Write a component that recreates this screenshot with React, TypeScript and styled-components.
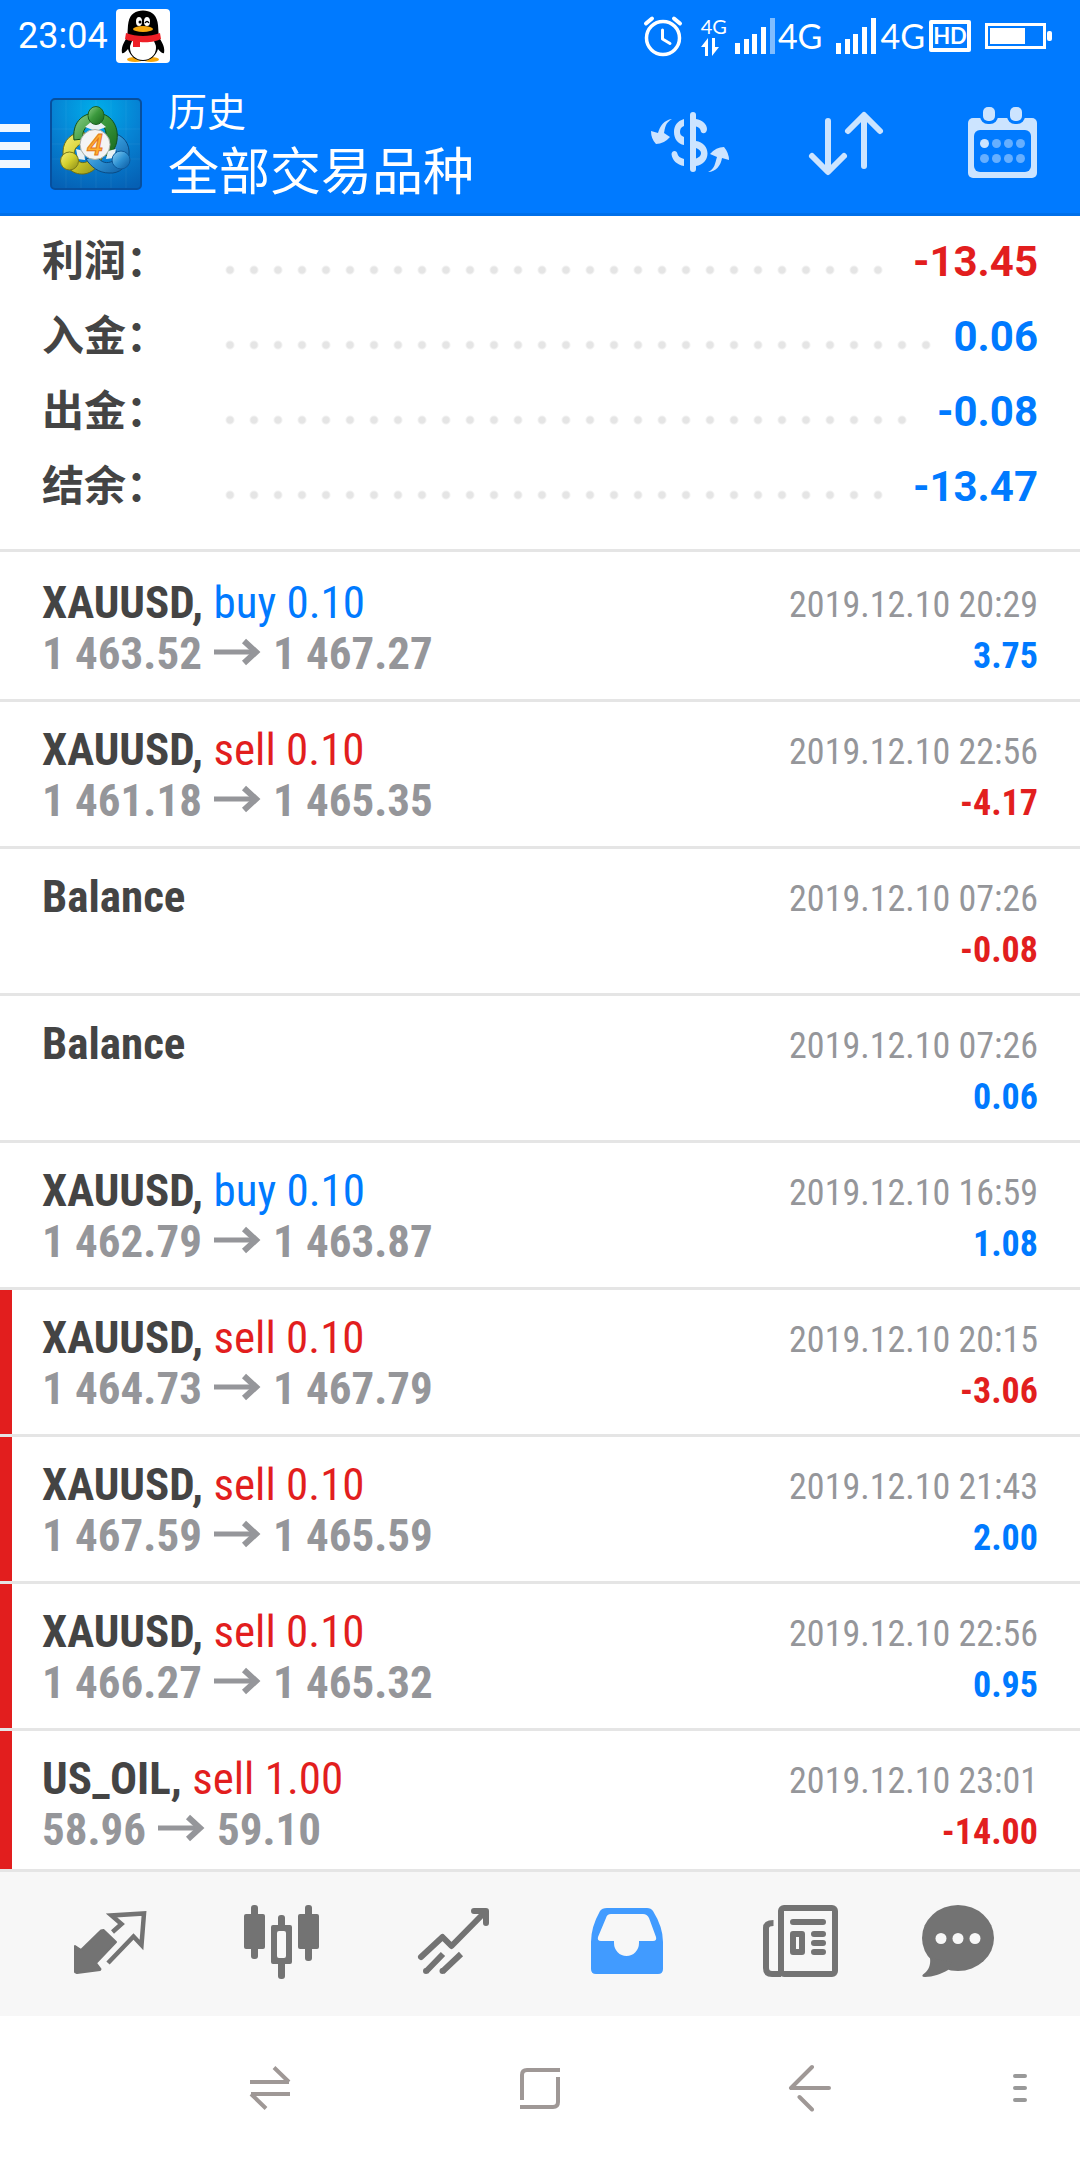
import React from "react";
import styled, { createGlobalStyle } from "styled-components";

const BLUE = "#007aff";
const RED = "#e21e1e";
const DARK = "#444444";
const GREY = "#95969a";
const LINE = "#e5e5e5";
const TAB = "#737373";
const ACTION = "#cce4ff";

const SANS = `Roboto, "Noto Sans CJK SC", sans-serif`;
const CONDENSED = `"Roboto Condensed", Roboto, sans-serif`;

const GlobalStyle = createGlobalStyle`
  *, *::before, *::after { box-sizing: border-box; }
  body { margin: 0; background: #ffffff; font-family: ${SANS}; }
  button { border: 0; padding: 0; background: none; font: inherit; color: inherit; cursor: pointer; }
  svg { display: block; flex: none; }
`;

const Screen = styled.div`
  display: flex;
  flex-direction: column;
  height: 100vh;
  background: #ffffff;
`;

/* ---------- status bar ---------- */

const StatusBar = styled.div`
  flex: none;
  display: flex;
  align-items: center;
  justify-content: space-between;
  height: 72px;
  padding: 0 28px 0 18px;
  background: ${BLUE};
  color: #ffffff;
`;

const StatusGroup = styled.div<{ $gap: number }>`
  display: flex;
  align-items: center;
  gap: ${(p) => p.$gap}px;
`;

const Clock = styled.time`
  font-size: 36px;
  line-height: 72px;
`;

const NetworkLabel = styled.span`
  font-family: Lato, sans-serif;
  font-size: 34px;
  line-height: 40px;
`;

const DataLabel = styled.div`
  display: flex;
  flex-direction: column;
  align-items: flex-start;
  gap: 2px;
  font-family: Lato, sans-serif;
  font-size: 20px;
  line-height: 20px;
`;

const HdBadge = styled.span`
  border: 4px solid #ffffff;
  border-radius: 2px;
  width: 42px;
  height: 32px;
  text-align: center;
  font-family: Lato, sans-serif;
  font-weight: 700;
  font-size: 22px;
  line-height: 24px;
`;

/* ---------- header ---------- */

const Header = styled.header`
  flex: none;
  display: flex;
  align-items: center;
  height: 144px;
  background: ${BLUE};
  box-shadow: inset 0 -3px 0 #0070ea;
  color: #ffffff;
`;

const MenuButton = styled.button`
  display: flex;
  flex-direction: column;
  gap: 10px;
  width: 50px;
  padding-top: 4px;
`;

const MenuLine = styled.span`
  width: 30px;
  height: 8px;
  background: #f0f7ff;
`;

const Titles = styled.div`
  display: flex;
  flex-direction: column;
  flex: 1;
  padding: 3px 0 0 26px;
`;

const Overline = styled.span`
  font-size: 39px;
  line-height: 54px;
`;

const Title = styled.h1`
  margin: 0;
  font-weight: 400;
  font-size: 51px;
  line-height: 66px;
`;

const ActionButton = styled.button`
  display: grid;
  place-items: center;
  width: 156px;
  height: 100%;
`;

/* ---------- summary ---------- */

const Summary = styled.dl`
  flex: none;
  margin: 0;
  padding: 8px 42px 25px;
  border-bottom: 3px solid ${LINE};
`;

const SummaryRow = styled.div`
  display: flex;
  align-items: center;
  height: 75px;
  font-size: 42px;
  line-height: 75px;
  font-weight: 700;
`;

const SummaryName = styled.dt`
  width: 176px;
  color: ${DARK};
`;

const Leader = styled.span`
  flex: 1;
  height: 10px;
  margin: 16px 20px 0 0;
  background: radial-gradient(circle at 12px 5px, ${LINE} 3px, transparent 5px) 0 0 / 24px 10px repeat-x;
`;

const SummaryValue = styled.dd<{ $color: string }>`
  margin: 0;
  color: ${(p) => p.$color};
`;

/* ---------- history ---------- */

const History = styled.ul`
  flex: 1;
  min-height: 0;
  overflow: hidden;
  margin: 0;
  padding: 3px 0 0;
  list-style: none;
`;

const Deal = styled.li<{ $marked: boolean }>`
  display: flex;
  justify-content: space-between;
  height: 147px;
  padding: 22px 42px 0;
  border-bottom: 3px solid ${LINE};
  background: linear-gradient(${(p) => (p.$marked ? RED : "transparent")} 0 0) 0 0 / 12px 100% no-repeat padding-box;
  font-family: ${CONDENSED};
`;

const DealSide = styled.div<{ $end?: boolean }>`
  display: flex;
  flex-direction: column;
  align-items: ${(p) => (p.$end ? "flex-end" : "flex-start")};
  padding-top: ${(p) => (p.$end ? 3 : 0)}px;
  font-size: ${(p) => (p.$end ? 36 : 45)}px;
  line-height: 51px;
`;

const Symbol = styled.strong`
  color: ${DARK};
`;

const Operation = styled.span<{ $color: string }>`
  color: ${(p) => p.$color};
`;

const Prices = styled.div`
  display: flex;
  align-items: center;
  gap: 12px;
  font-weight: 700;
  color: ${GREY};
`;

const DealTime = styled.time`
  color: ${GREY};
`;

const Profit = styled.strong<{ $color: string }>`
  color: ${(p) => p.$color};
`;

/* ---------- bottom bars ---------- */

const TabBar = styled.nav`
  flex: none;
  display: flex;
  height: 147px;
  padding: 0 24px;
  border-top: 3px solid ${LINE};
  background: #f7f7f7;
`;

const Tab = styled.button`
  flex: 1;
  display: grid;
  place-items: center;
`;

const SystemBar = styled.nav`
  flex: none;
  display: grid;
  grid-template-columns: 2fr 2fr 2fr 1fr;
  height: 144px;
  padding-left: 12.5%;
  background: #ffffff;
`;

const SystemButton = styled.button`
  display: grid;
  place-items: center;
  &:last-child { padding-left: 15px; }
`;

/* ---------- drawings ---------- */

const Penguin = () => (
  <svg width="54" height="54" viewBox="0 0 54 54" role="img" aria-label="QQ">
    <rect width="54" height="54" rx="4" fill="#fff" />
    <ellipse cx="19" cy="50.5" rx="8" ry="2.5" fill="#f6a80e" />
    <ellipse cx="35" cy="50.5" rx="8" ry="2.5" fill="#f6a80e" />
    <path d="M12 27 C7 34 5 39 6 44 C8 45 10 42 12 40 C14 47 20 52 27 52 C34 52 40 47 42 40 C44 42 46 45 48 44 C49 39 47 34 42 27Z" fill="#000" />
    <path d="M11 28 C12 22 11.500 17 12.500 13 C14 5 20 1.500 27 1.500 C34 1.500 40 5 41.500 13 C42.500 17 42 22 43 28Z" fill="#000" />
    <ellipse cx="27" cy="39" rx="13" ry="12" fill="#fff" />
    <ellipse cx="23" cy="12.500" rx="3" ry="4.500" fill="#fff" />
    <ellipse cx="31" cy="12.500" rx="3" ry="4.500" fill="#fff" />
    <circle cx="24" cy="13" r="1.500" fill="#000" />
    <path d="M29 14 Q31 11 33 14" fill="none" stroke="#000" strokeWidth="1.300" />
    <ellipse cx="27" cy="20" rx="10" ry="3" fill="#f6a80e" />
    <path d="M10 24 C20 28 34 28 44 24 L45 30 C41 32 33 34 24 33 V38 H17 V32 C14 32 11 31 9 30Z" fill="#ee1f27" />
  </svg>
);

const Alarm = () => (
  <svg width="40" height="42" viewBox="0 0 40 42" fill="none" stroke="#fff" strokeLinecap="round" aria-hidden>
    <circle cx="20" cy="23" r="16.500" strokeWidth="3.500" />
    <path d="M19.500 15 V24 L27 28.500" strokeWidth="3" strokeLinejoin="round" />
    <path d="M3 8.500 L9 3.500 M37 8.500 L31 3.500" strokeWidth="4" />
  </svg>
);

const DataArrows = () => (
  <svg width="18" height="18" viewBox="0 0 18 18" fill="#fff" aria-hidden>
    <path d="M0 9 L7 0 V18 H4 V9Z M18 9 L11 18 V0 H14 V9Z" />
  </svg>
);

const Signal = ({ last }: { last: number }) => (
  <svg width="40" height="36" viewBox="0 0 40 36" fill="#fff" aria-hidden>
    <rect x="0" y="25" width="5" height="11" />
    <rect x="9" y="21" width="5" height="15" />
    <rect x="17" y="16" width="5" height="20" />
    <rect x="26" y="9" width="5" height="27" />
    <rect x="35" y="0" width="5" height="36" opacity={last} />
  </svg>
);

const Battery = () => (
  <svg width="67" height="26" viewBox="0 0 67 26" fill="#fff" aria-hidden>
    <rect x="1.500" y="1.500" width="58" height="23" fill="none" stroke="#fff" strokeWidth="3" />
    <rect x="5" y="5" width="35" height="16" />
    <rect x="62" y="8" width="5" height="10" rx="2" />
  </svg>
);

const AppLogo = () => (
  <svg width="92" height="92" viewBox="0 0 92 92" role="img" aria-label="MetaTrader 4">
    <defs>
      <radialGradient id="bg" cx="50%" cy="12%" r="95%">
        <stop offset="0" stopColor="#00aeea" />
        <stop offset="0.500" stopColor="#0683d4" />
        <stop offset="1" stopColor="#0560b4" />
      </radialGradient>
      <linearGradient id="green" x1="0" y1="0" x2="1" y2="1">
        <stop offset="0" stopColor="#8fd08a" />
        <stop offset="0.450" stopColor="#3c9a3e" />
        <stop offset="1" stopColor="#15651c" />
      </linearGradient>
      <linearGradient id="yellow" x1="0" y1="0" x2="1" y2="1">
        <stop offset="0" stopColor="#f6f07c" />
        <stop offset="0.500" stopColor="#d3cf2c" />
        <stop offset="1" stopColor="#87891a" />
      </linearGradient>
      <linearGradient id="blue" x1="0" y1="0" x2="1" y2="1">
        <stop offset="0" stopColor="#8fd2f5" />
        <stop offset="0.500" stopColor="#2f92d3" />
        <stop offset="1" stopColor="#0a579f" />
      </linearGradient>
    </defs>
    <rect x="1" y="1" width="90" height="90" rx="4" fill="url(#bg)" stroke="#064f9e" strokeWidth="2" />
    <path d="M31 2 V90 M46 2 V90 M61 2 V90 M2 31 H90 M2 46 H90 M2 61 H90 M16 2 V90 M76 2 V90" stroke="#fff" strokeOpacity="0.060" />
    <path d="M34 34 C22 34 13 42 13 54 C13 68 22 77 34 76 C42 75 49 69 52 60 L42 58 C38 66 31 66 27 62 C21 55 25 46 37 44Z" fill="url(#yellow)" stroke="#6d6e12" />
    <path d="M62 35 C74 37 80 46 79 57 C78 69 69 76 59 75 C49 75 41 69 36 61 L47 58 C51 65 57 66 63 63 C68 60 68 53 63 49Z" fill="url(#blue)" stroke="#0b4b83" />
    <path d="M24 42 C22 26 31 15 46 15 C61 15 69 28 67 42 C66 50 62 55 56 58 L52 46 C58 40 57 30 51 26 L41 26 C34 29 32 35 33 41Z" fill="url(#green)" stroke="#124f18" />
    <path d="M35 29 L41 24 H50 L56 29 L46 33Z M26 51 L34 53 L35 62 L28 61Z M56 61 L58 53 L66 51 L64 60Z" fill="#e8f1f4" />
    <ellipse cx="46" cy="17.500" rx="8" ry="9" fill="url(#green)" stroke="#1a5f20" />
    <circle cx="19.500" cy="63" r="9" fill="url(#yellow)" stroke="#77781a" />
    <circle cx="71" cy="62" r="9" fill="url(#blue)" stroke="#0f5a9b" />
    <circle cx="45" cy="46.500" r="15" fill="#f4f4f4" stroke="#a9b0a9" />
    <text x="45" y="57" textAnchor="middle" fontFamily="Open Sans, sans-serif" fontStyle="italic" fontWeight="600" fontSize="28" fill="#ffb02e" stroke="#e5761c">4</text>
  </svg>
);

const CurrencyIcon = () => (
  <svg width="96" height="96" viewBox="0 0 96 96" fill={ACTION} aria-hidden>
    <path d="M51 19 V73" stroke={ACTION} strokeWidth="6" strokeLinecap="round" />
    <path d="M42 23 C35 25 32 30 32 36 C32 43 36 48 42 49 V41 C39 40 38 38 38 36 C38 33 39 31 42 30Z" />
    <path d="M54 23 C60 24 65 28 65 33 C65 38 59 39 58.500 34 C58 32 56 31 54 30.500Z" />
    <path d="M54 45 C61 46 65.500 51 65.500 57.500 C65.500 64 61 69 54 70 V62.500 C58 61 59 59 59 57 C59 55 57 53 54 52Z" />
    <path d="M42 70 C35 69 30 64 29.500 58 C30 54 35 54 35.500 58 C36 60 38 62 42 63Z" />
    <path d="M30 23 C23 27 23 32 22 37 L28 41 Q22 48 14 48 Q9 43 9 35 L16 37 C18 30 22 24 30 23Z" />
    <path d="M66 76 C73 73 73 67 75 61 L68 58 Q74 51 82 51 Q87 57 87 64 L80 62 C79 69 74 76 66 76Z" />
  </svg>
);

const SortIcon = () => (
  <svg width="96" height="96" viewBox="0 0 96 96" fill="none" stroke={ACTION} strokeWidth="6" strokeLinecap="round" strokeLinejoin="round" aria-hidden>
    <path d="M30 25 V75 M14 60 L30 76 L46 60" />
    <path d="M66 70 V20 M50 35 L66 19 L82 35" />
  </svg>
);

const CalendarIcon = () => (
  <svg width="96" height="96" viewBox="0 0 96 96" aria-hidden>
    <rect x="14" y="22" width="69" height="60" rx="5" fill={ACTION} />
    <rect x="20" y="34" width="57" height="42" rx="6" fill={BLUE} />
    {[29, 56].map((x) => (
      <g key={x}>
        <rect x={x - 3} y="8" width="18" height="20" rx="8" fill={BLUE} />
        <rect x={x} y="11" width="12" height="14" rx="5" fill={ACTION} />
      </g>
    ))}
    {[47, 62].map((y) =>
      [30, 42, 54, 66].map((x) => (
        <circle key={`${x}-${y}`} cx={x + 0.5} cy={y + 0.5} r="4.500" fill={ACTION} opacity={x === 30 && y === 47 ? 1 : 0.5} />
      ))
    )}
  </svg>
);

const ArrowRight = () => (
  <svg width="47" height="51" viewBox="0 0 47 51" fill="none" stroke={GREY} strokeWidth="5" role="img" aria-label="to">
    <path d="M0 24 H42" />
    <path d="M30 13 L42 24 L30 35" strokeWidth="6" />
  </svg>
);

const QuotesIcon = () => (
  <svg width="96" height="96" viewBox="0 0 96 96" aria-hidden>
    <path d="M13 50 L19 54 L39 34.500 L41.500 34 L54 46 L34 67 L38.500 73 L38 74 L15 77 L13 76Z" fill={TAB} stroke={TAB} strokeWidth="2" strokeLinejoin="round" />
    <path d="M50.500 36 L59.500 28 L49.500 19.500 L82 17.500 L79.500 49 L71.500 40.500 L46 67" fill="none" stroke={TAB} strokeWidth="4.500" />
  </svg>
);

const ChartIcon = () => (
  <svg width="96" height="96" viewBox="0 0 96 96" fill={TAB} aria-hidden>
    <rect x="17" y="9" width="7" height="54" rx="3" />
    <rect x="10" y="18" width="21" height="35" rx="2" />
    <rect x="71" y="9" width="7" height="56" rx="3" />
    <rect x="64" y="18" width="21" height="35" rx="2" />
    <rect x="44" y="19" width="7" height="14" rx="3" />
    <rect x="44" y="62" width="7" height="21" rx="3" />
    <path fillRule="evenodd" d="M39 29 H56 Q58 29 58 31 V66 Q58 68 56 68 H39 Q37 68 37 66 V31 Q37 29 39 29Z M45 35 Q43 35 43 37 V60 Q43 62 45 62 H50 Q52 62 52 60 V37 Q52 35 50 35Z" />
  </svg>
);

const TradeIcon = () => (
  <svg width="96" height="96" viewBox="0 0 96 96" fill="none" stroke={TAB} strokeWidth="6" aria-hidden>
    <path d="M15 61 L36.500 41 L45.500 50 L79 16 M68 15 H80 V27" strokeLinecap="round" strokeLinejoin="round" />
    <path d="M20 75.500 L37 58 M36.500 75.500 L55 58" />
    <circle cx="20" cy="75" r="3" fill={TAB} stroke="none" />
    <circle cx="36.500" cy="75" r="3" fill={TAB} stroke="none" />
  </svg>
);

const HistoryIcon = () => (
  <svg width="96" height="96" viewBox="0 0 96 96" fill="#419bff" aria-hidden>
    <path
      fillRule="evenodd"
      d="M29 12 H69 Q73 12 75 15 Q85 31 85 46 V73 Q85 78 80 78 H18 Q13 78 13 73 V46 Q13 31 22 15 Q24 12 29 12Z M33 18 Q29 18 28 22 L20 41 Q19 45 23 45 H36 V47 A12.500 13 0 0 0 61 47 V45 H75 Q79 45 78 41 L71 22 Q69 18 65 18Z"
    />
  </svg>
);

const NewsIcon = () => (
  <svg width="96" height="96" viewBox="0 0 96 96" fill="none" stroke={TAB} strokeWidth="6" aria-hidden>
    <rect x="31" y="12" width="54" height="66" rx="3" />
    <path d="M23.500 27 Q16 27 16 32 V72 Q16 78 22 78 H31" />
    <rect x="43" y="38" width="9" height="18" strokeLinejoin="round" />
    <path d="M43 26 H73 M64 38 H73 M64 47 H73 M64 56 H73" strokeLinecap="round" />
  </svg>
);

const ChatIcon = () => (
  <svg width="96" height="96" viewBox="0 0 96 96" fill={TAB} aria-hidden>
    <ellipse cx="36" cy="42" rx="36" ry="33" />
    <path d="M8 62 C9 70 6 75 1 78.500 Q-1 81 3 81 C11 81 19 78 26 74 L30 66Z" />
    {[19, 36, 53].map((x) => (
      <circle key={x} cx={x} cy="42.500" r="5.500" fill="#f7f7f7" />
    ))}
  </svg>
);

const SystemIcon = ({ path, round, color = "#9f9896" }: { path: string; round?: boolean; color?: string }) => (
  <svg width="48" height="48" viewBox="0 0 48 48" fill="none" stroke={color} strokeWidth="4" strokeLinecap={round ? "round" : "butt"} aria-hidden>
    <path d={path} />
  </svg>
);

/* ---------- data ---------- */

const summary = [
  { name: "利润：", value: "-13.45", color: RED },
  { name: "入金：", value: "0.06", color: BLUE },
  { name: "出金：", value: "-0.08", color: BLUE },
  { name: "结余：", value: "-13.47", color: BLUE },
];

interface DealData {
  symbol: string;
  side?: "buy" | "sell";
  volume?: string;
  open?: string;
  close?: string;
  time: string;
  profit: string;
  marked?: boolean;
}

const deals: DealData[] = [
  { symbol: "XAUUSD", side: "buy", volume: "0.10", open: "1 463.52", close: "1 467.27", time: "2019.12.10 20:29", profit: "3.75" },
  { symbol: "XAUUSD", side: "sell", volume: "0.10", open: "1 461.18", close: "1 465.35", time: "2019.12.10 22:56", profit: "-4.17" },
  { symbol: "Balance", time: "2019.12.10 07:26", profit: "-0.08" },
  { symbol: "Balance", time: "2019.12.10 07:26", profit: "0.06" },
  { symbol: "XAUUSD", side: "buy", volume: "0.10", open: "1 462.79", close: "1 463.87", time: "2019.12.10 16:59", profit: "1.08" },
  { symbol: "XAUUSD", side: "sell", volume: "0.10", open: "1 464.73", close: "1 467.79", time: "2019.12.10 20:15", profit: "-3.06", marked: true },
  { symbol: "XAUUSD", side: "sell", volume: "0.10", open: "1 467.59", close: "1 465.59", time: "2019.12.10 21:43", profit: "2.00", marked: true },
  { symbol: "XAUUSD", side: "sell", volume: "0.10", open: "1 466.27", close: "1 465.32", time: "2019.12.10 22:56", profit: "0.95", marked: true },
  { symbol: "US_OIL", side: "sell", volume: "1.00", open: "58.96", close: "59.10", time: "2019.12.10 23:01", profit: "-14.00", marked: true },
];

const tabs = [
  { label: "Quotes", Icon: QuotesIcon },
  { label: "Chart", Icon: ChartIcon },
  { label: "Trade", Icon: TradeIcon },
  { label: "History", Icon: HistoryIcon },
  { label: "News", Icon: NewsIcon },
  { label: "Chat", Icon: ChatIcon },
];

const DealRow = ({ deal }: { deal: DealData }) => (
  <Deal $marked={!!deal.marked}>
    <DealSide>
      <div>
        <Symbol>{deal.side ? `${deal.symbol},` : deal.symbol}</Symbol>
        {deal.side && (
          <Operation $color={deal.side === "buy" ? BLUE : RED}>
            {" "}
            {deal.side} {deal.volume}
          </Operation>
        )}
      </div>
      {deal.open && (
        <Prices>
          <span>{deal.open}</span>
          <ArrowRight />
          <span>{deal.close}</span>
        </Prices>
      )}
    </DealSide>
    <DealSide $end>
      <DealTime>{deal.time}</DealTime>
      <Profit $color={deal.profit.startsWith("-") ? RED : BLUE}>{deal.profit}</Profit>
    </DealSide>
  </Deal>
);

export default function App() {
  return (
    <Screen>
      <GlobalStyle />
      <StatusBar>
        <StatusGroup $gap={8}>
          <Clock>23:04</Clock>
          <Penguin />
        </StatusGroup>
        <StatusGroup $gap={14}>
          <StatusGroup $gap={18}>
            <Alarm />
            <StatusGroup $gap={8}>
              <DataLabel>
                4G
                <DataArrows />
              </DataLabel>
              <StatusGroup $gap={3}>
                <Signal last={0.5} />
                <NetworkLabel>4G</NetworkLabel>
              </StatusGroup>
            </StatusGroup>
          </StatusGroup>
          <StatusGroup $gap={4}>
            <Signal last={1} />
            <NetworkLabel>4G</NetworkLabel>
            <HdBadge>HD</HdBadge>
          </StatusGroup>
          <Battery />
        </StatusGroup>
      </StatusBar>
      <Header>
        <MenuButton aria-label="Menu">
          <MenuLine />
          <MenuLine />
          <MenuLine />
        </MenuButton>
        <AppLogo />
        <Titles>
          <Overline>历史</Overline>
          <Title>全部交易品种</Title>
        </Titles>
        <ActionButton aria-label="Symbol">
          <CurrencyIcon />
        </ActionButton>
        <ActionButton aria-label="Sort">
          <SortIcon />
        </ActionButton>
        <ActionButton aria-label="Period">
          <CalendarIcon />
        </ActionButton>
      </Header>
      <Summary>
        {summary.map((row) => (
          <SummaryRow key={row.name}>
            <SummaryName>{row.name}</SummaryName>
            <Leader aria-hidden />
            <SummaryValue $color={row.color}>{row.value}</SummaryValue>
          </SummaryRow>
        ))}
      </Summary>
      <History>
        {deals.map((deal, i) => (
          <DealRow key={i} deal={deal} />
        ))}
      </History>
      <TabBar>
        {tabs.map(({ label, Icon }) => (
          <Tab key={label} aria-label={label}>
            <Icon />
          </Tab>
        ))}
      </TabBar>
      <SystemBar>
        <SystemButton aria-label="Recent apps">
          <SystemIcon path="M4 18 H43 M28 3.500 L43 18 M5 30 H44 M5 30 L20 44.500" />
        </SystemButton>
        <SystemButton aria-label="Home">
          <SystemIcon path="M6 36 V11 Q6 6 11 6 H44 M4 43 H37 Q42 43 42 38 V13" />
        </SystemButton>
        <SystemButton aria-label="Back">
          <SystemIcon round path="M5 24 H43 M5 24 L26 3 M13.500 33 L26 45.500" />
        </SystemButton>
        <SystemButton aria-label="More">
          <SystemIcon round color="#999999" path="M19 12 H29 M19 24 H29 M19 36 H29" />
        </SystemButton>
      </SystemBar>
    </Screen>
  );
}
